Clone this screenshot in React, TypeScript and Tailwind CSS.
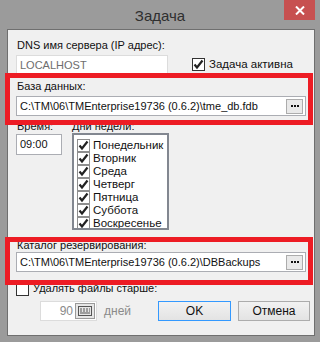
import React from "react";

const days = ["Понедельник", "Вторник", "Среда", "Четверг", "Пятница", "Суббота", "Воскресенье"];

function Check({ checked = true, dim = false }: { checked?: boolean; dim?: boolean }) {
  return (
    <span
      className={`w-[13px] h-[13px] shrink-0 border bg-white flex items-center justify-center ${
        dim ? "border-[#8f8f8f]" : "border-[#333]"
      }`}
    >
      {checked && (
        <svg width="11" height="11" viewBox="0 0 11 11">
          <path d="M1.5 5.5 L4 8.5 L9.5 1.5" fill="none" stroke="#222" strokeWidth="2.2" />
        </svg>
      )}
    </span>
  );
}

function DotsButton() {
  return (
    <span className="w-[17px] h-[15px] border border-[#acacac] bg-[#e9e9e9] flex items-center justify-center gap-[1px]">
      <span className="w-[2px] h-[2px] bg-[#111]" />
      <span className="w-[2px] h-[2px] bg-[#111]" />
      <span className="w-[2px] h-[2px] bg-[#111]" />
    </span>
  );
}

function PathField({ value }: { value: string }) {
  return (
    <div className="ml-[8px] w-[290px] h-[20px] border border-[#abadb3] bg-white flex items-center pl-[3px] pr-[2px]">
      <span className="flex-1">{value}</span>
      <DotsButton />
    </div>
  );
}

export default function App() {
  return (
    <div
      className="w-[320px] h-[342px] bg-[#9b9b9b] flex flex-col text-[11px] leading-[13px] text-[#111]"
      style={{ fontFamily: '"Liberation Sans", Arial, sans-serif' }}
    >
      {/* title bar */}
      <div className="relative h-[29px] flex items-center justify-center">
        <span className="text-[15px] leading-[18px] text-[#2f2f2f] mt-[3px]">Задача</span>
        <div className="absolute right-[5px] top-0 w-[31px] h-[20px] bg-[#c75050] flex items-center justify-center">
          <svg width="10" height="9" viewBox="0 0 10 9">
            <path d="M1 0.5 L9 8.5 M9 0.5 L1 8.5" stroke="#fff" strokeWidth="2" />
          </svg>
        </div>
      </div>

      {/* client */}
      <div className="relative ml-[7px] w-[308px] h-[307px] border border-[#6f6f6f] bg-[#f0f0f0] flex flex-col">
        <div className="mt-[9px] ml-[9px]">DNS имя сервера (IP адрес):</div>
        <div className="mt-[3px] flex items-start">
          <div className="ml-[8px] w-[152px] h-[21px] border border-[#dcdcdc] bg-white flex items-center pl-[3px] text-[#6d6d6d]">
            LOCALHOST
          </div>
          <div className="ml-[24px] mt-[3px] flex items-center gap-[4px]">
            <Check />
            <span className="text-[11.5px]">Задача активна</span>
          </div>
        </div>

        <div className="mt-[4px] ml-[9px]">База данных:</div>
        <div className="mt-[3px]">
          <PathField value="C:\TM\06\TMEnterprise19736 (0.6.2)\tme_db.fdb" />
        </div>

        <div className="mt-[4px] flex">
          <div className="ml-[9px] w-[55px]">Время:</div>
          <div>Дни недели:</div>
        </div>
        <div className="flex items-start">
          <div className="ml-[8px] mt-[1px] w-[46px] h-[21px] border border-[#abadb3] bg-white flex items-center pl-[3px]">
            09:00
          </div>
          <div className="ml-[10px] w-[97px] h-[97px] border-2 border-[#828790] bg-white pt-[4px] pl-[3px] flex flex-col overflow-hidden">
            {days.map((d) => (
              <div key={d} className="h-[13px] flex items-center gap-[3px]">
                <Check dim />
                <span className="text-[11.5px] whitespace-nowrap">{d}</span>
              </div>
            ))}
          </div>
        </div>

        <div className="mt-[9px] ml-[9px]">Каталог резервирования:</div>
        <div className="mt-[0px]">
          <PathField value="C:\TM\06\TMEnterprise19736 (0.6.2)\DBBackups" />
        </div>

        <div className="mt-[11px] ml-[8px] flex items-start gap-[4px]">
          <Check checked={false} />
          <span className="-mt-[1px]">Удалять файлы старше:</span>
        </div>

        <div className="mt-[5px] flex items-center">
          <div className="ml-[32px] w-[57px] h-[20px] border border-[#dcdcdc] bg-white flex items-center justify-end">
            <span className="text-[#8a8a8a] text-[12px] mr-[2px]">90</span>
            <span className="w-[20px] h-[16px] border border-[#9a9a9a] bg-[#e6e6e6] flex items-center justify-center mr-[1px]">
              <svg width="14" height="10" viewBox="0 0 14 10">
                <rect x="0.5" y="0.5" width="13" height="9" fill="none" stroke="#555" />
                <path d="M2 3h2M5 3h2M8 3h2M11 3h1M2 5h2M5 5h2M8 5h2M11 5h1M2 7h10" stroke="#555" />
              </svg>
            </span>
          </div>
          <span className="ml-[7px] text-[#8a8a8a] text-[12px]">дней</span>
          <button className="ml-[27px] w-[73px] h-[20px] border border-[#3399ff] bg-gradient-to-b from-[#f2f2f2] to-[#e3e3e3] flex items-center justify-center text-[12px]">
            OK
          </button>
          <button className="ml-[7px] w-[72px] h-[20px] border border-[#acacac] bg-gradient-to-b from-[#f2f2f2] to-[#e3e3e3] flex items-center justify-center text-[12px]">
            Отмена
          </button>
        </div>

        {/* red highlight frames */}
        <div className="absolute left-[-3px] top-[43px] w-[308px] h-[52px] border-[5px] border-[#ed1c24]" />
        <div className="absolute left-[-3px] top-[207px] w-[308px] h-[48px] border-[5px] border-[#ed1c24]" />
      </div>
    </div>
  );
}
